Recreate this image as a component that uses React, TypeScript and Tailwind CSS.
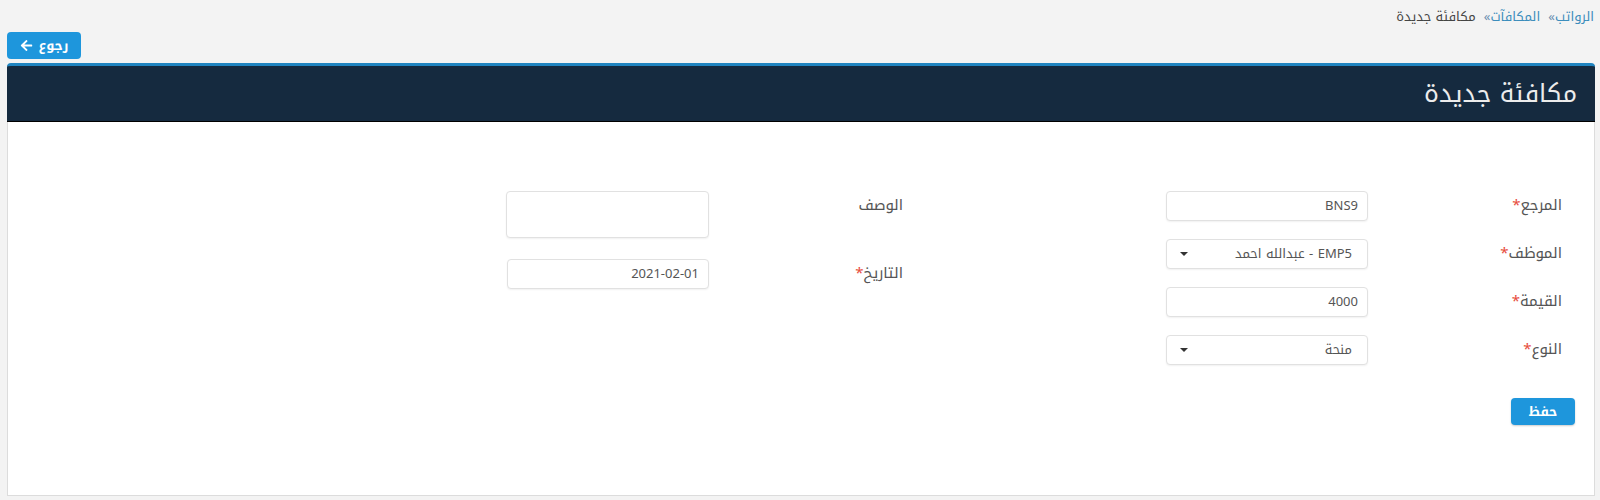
import { FaArrowLeft } from 'react-icons/fa'

const font = "font-['Noto_Kufi_Arabic','Droid_Arabic_Kufi','Noto_Sans_Arabic','Noto_Sans','DejaVu_Sans',sans-serif]"

function Label({ text, required }: { text: string; required?: boolean }) {
  return (
    <div className="w-[194px] shrink-0 pt-[3px] text-[15px] leading-[22px] text-[#555]">
      {text}
      {required && <span className="text-[#e74c3c]">*</span>}
    </div>
  )
}

function TextInput({ value }: { value: string }) {
  return (
    <div className="flex h-[30px] w-[202px] items-center rounded-[4px] border border-[#e1e1e1] bg-white pr-[9px] text-[13px] text-[#555] shadow-[0_1px_2px_rgba(0,0,0,0.06)]">
      {value}
    </div>
  )
}

function SelectInput({ value }: { value: string }) {
  return (
    <div className="flex h-[30px] w-[202px] items-center justify-between rounded-[4px] border border-[#e1e1e1] bg-white pl-[13px] pr-[15px] text-[13px] text-[#555] shadow-[0_1px_2px_rgba(0,0,0,0.06)]">
      <span>{value}</span>
      <span className="h-0 w-0 border-x-[4px] border-t-[4px] border-x-transparent border-t-[#333]" />
    </div>
  )
}

export default function App() {
  return (
    <div dir="rtl" className={`min-h-[500px] bg-[#f3f3f3] pl-[7px] pr-[5px] ${font}`}>
      {/* Breadcrumb */}
      <div className="flex h-[32px] items-start gap-[8px] pr-[1px] pt-[7px] text-[13px] leading-[20px]">
        <span className="text-[#3c8dbc]">الرواتب<span className="text-[#6b8fb0]">»</span></span>
        <span className="text-[#3c8dbc]">المكافآت<span className="text-[#6b8fb0]">»</span></span>
        <span className="text-[#444]">مكافئة جديدة</span>
      </div>

      {/* Back */}
      <div className="flex justify-end">
        <button className="flex h-[27px] w-[74px] items-center justify-center gap-[6px] rounded-[4px] bg-[#1e96dc] text-[13px] font-bold text-white">
          <span>رجوع</span>
          <FaArrowLeft className="h-[13px] w-[13px]" />
        </button>
      </div>

      {/* Card */}
      <div className="mt-[4px]">
        <div className="flex h-[59px] items-center rounded-t-[4px] border-t-[3px] border-b border-t-[#1f84c0] border-b-black bg-[#152a3f] pr-[18px]">
          <h1 className="text-[25px] leading-[30px] text-[#ececec]">مكافئة جديدة</h1>
        </div>
        <div className="border-x border-b border-[#dcdcdc] bg-white pb-[70px] pr-[19px] pt-[69px]">
          <div className="flex pr-[13px]">
            <div className="flex w-[659px] flex-col gap-[18px]">
              <div className="flex">
                <Label text="المرجع" required />
                <TextInput value="BNS9" />
              </div>
              <div className="flex">
                <Label text="الموظف" required />
                <SelectInput value="EMP5 - عبدالله احمد" />
              </div>
              <div className="flex">
                <Label text="القيمة" required />
                <TextInput value="4000" />
              </div>
              <div className="flex">
                <Label text="النوع" required />
                <SelectInput value="منحة" />
              </div>
            </div>
            <div className="flex w-[659px] flex-col gap-[21px]">
              <div className="flex">
                <Label text="الوصف" />
                <div className="h-[47px] w-[203px] rounded-[4px] border border-[#e1e1e1] bg-white shadow-[0_1px_2px_rgba(0,0,0,0.06)]" />
              </div>
              <div className="flex">
                <Label text="التاريخ" required />
                <TextInput value="2021-02-01" />
              </div>
            </div>
          </div>
          <div className="mt-[33px] flex">
            <button className="h-[27px] w-[64px] rounded-[4px] bg-[#1e96dc] text-[13px] font-bold text-white shadow-[0_1px_2px_rgba(0,0,0,0.2)]">
              حفظ
            </button>
          </div>
        </div>
      </div>
    </div>
  )
}
